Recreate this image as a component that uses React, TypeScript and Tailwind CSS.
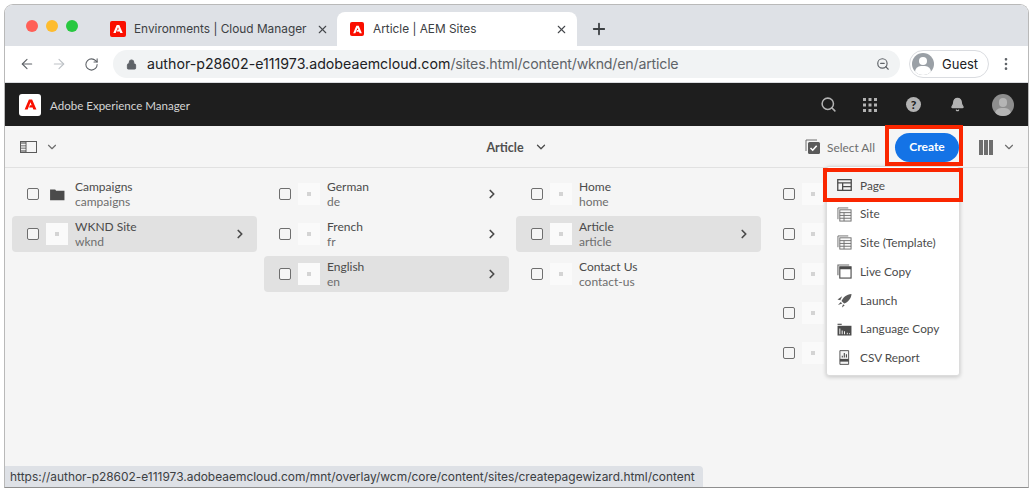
import { ChevronDown, ChevronRight, Plus, X, ArrowLeft, ArrowRight, RotateCw, Lock, ZoomOut, EllipsisVertical, Search, Bell } from "lucide-react"

const chromeFont = "font-['Inter','Liberation_Sans',sans-serif]"
const aemFont = "font-['Lato','Open_Sans',sans-serif]"

function AdobeMark({ className }: { className?: string }) {
  return (
    <svg viewBox="0 0 24 24" className={className} fill="currentColor">
      <path d="M9.4 4h5.2L21.5 20h-4.9l-1.3-3.2H9.7l1.5-3.6h2.6L12 8.5 7.4 20H2.6z" />
    </svg>
  )
}

function Thumb() {
  return (
    <div className="w-[22px] h-[22px] bg-[#fafafa] flex items-center justify-center shrink-0">
      <div className="w-[4px] h-[4px] bg-[#d4d4d4]" />
    </div>
  )
}

function FolderIcon() {
  return (
    <div className="w-[22px] h-[22px] flex items-center justify-center shrink-0">
      <svg viewBox="0 0 16 14" className="w-[15px] h-[13px]" fill="#4b4b4b">
        <path d="M0 1.5h5.5l1 1.5H15.5V13.2H0z" />
      </svg>
    </div>
  )
}

type Row = { title: string; sub?: string; selected?: boolean; arrow?: boolean; folder?: boolean }

function ColumnRow({ row }: { row: Row }) {
  return (
    <div className={`h-[36px] mb-[3.75px] rounded-[4px] flex items-center pl-[15px] pr-[10px] ${row.selected ? "bg-[#e1e1e1]" : ""}`}>
      <div className="w-[12px] h-[12px] border border-[#6e6e6e] rounded-[2px] bg-[#f5f5f5] shrink-0" />
      <div className="ml-[7px]">{row.folder ? <FolderIcon /> : <Thumb />}</div>
      <div className="ml-[7px] flex-1 text-[12px] leading-[15px] text-[#4b4b4b]">
        <div>{row.title}</div>
        {row.sub && <div className="text-[#6e6e6e]">{row.sub}</div>}
      </div>
      {row.arrow && <ChevronRight size={14} strokeWidth={3} className="text-[#4b4b4b]" />}
    </div>
  )
}

const columns: Row[][] = [
  [
    { title: "Campaigns", sub: "campaigns", folder: true },
    { title: "WKND Site", sub: "wknd", selected: true, arrow: true },
  ],
  [
    { title: "German", sub: "de", arrow: true },
    { title: "French", sub: "fr", arrow: true },
    { title: "English", sub: "en", selected: true, arrow: true },
  ],
  [
    { title: "Home", sub: "home" },
    { title: "Article", sub: "article", selected: true, arrow: true },
    { title: "Contact Us", sub: "contact-us" },
  ],
  [{ title: "" }, { title: "" }, { title: "" }, { title: "" }, { title: "" }],
]

function PageIcon() {
  return (
    <svg viewBox="0 0 16 13" className="w-[15px] h-[12px]" fill="none" stroke="#4b4b4b" strokeWidth="1.4">
      <rect x="0.7" y="0.7" width="14.6" height="11.6" />
      <path d="M0.7 4.2h14.6M6 4.2v8.1M6 8.2h9.3" />
    </svg>
  )
}

function SiteIcon() {
  return (
    <svg viewBox="0 0 16 16" className="w-[15px] h-[15px]" fill="none" stroke="#6e6e6e" strokeWidth="1">
      <path d="M1 13V1h11" />
      <rect x="3" y="3" width="12" height="12" fill="#f8f8f8" />
      <path d="M3 6h12M3 9h12M3 12h12M7.5 6v9" />
    </svg>
  )
}

function LiveCopyIcon() {
  return (
    <svg viewBox="0 0 16 16" className="w-[15px] h-[15px]" fill="none" stroke="#6e6e6e" strokeWidth="1.2">
      <path d="M1 12V1h12" />
      <rect x="3" y="3" width="12" height="12" stroke="#4b4b4b" />
      <rect x="3" y="3" width="12" height="2.6" fill="#4b4b4b" stroke="none" />
    </svg>
  )
}

function LaunchIcon() {
  return (
    <svg viewBox="0 0 16 16" className="w-[15px] h-[15px]" fill="#5a5a5a">
      <path d="M15.5 1C10 1.5 6.5 4.5 4.8 8.5l2.8 2.8c4-1.7 7.4-5 7.9-10.3z" />
      <path d="M5.5 3.5 0.5 7l3 .6zM4 9.5l-3 3.4 4.6-1.8zM6.4 12l-1.2 3.4 3-2.2z" />
    </svg>
  )
}

function LanguageIcon() {
  return (
    <svg viewBox="0 0 16 14" className="w-[15px] h-[13px]">
      <path d="M0.5 0.8h4.5v1.2H0.5z" fill="#4b4b4b" />
      <path d="M0.5 3h15v10.5H0.5z" fill="#4b4b4b" />
      <path d="M2.5 6h1v6h-1zM5 8h1v4H5zM7.5 9h1v3h-1zM10.5 10.5h1V12h-1zM12.8 11h1v1h-1z" fill="#fff" />
    </svg>
  )
}

function ReportIcon() {
  return (
    <svg viewBox="0 0 12 16" className="w-[11px] h-[15px]">
      <path d="M1 0.5h9.5v15H1z" fill="#f4f4f4" stroke="#4b4b4b" />
      <rect x="1" y="9.5" width="9.5" height="3" fill="#4b4b4b" />
      <path d="M3 8h1.2V6H3zM5.2 8h1.2V3H5.2zM7.5 8h1.2V4.5H7.5z" fill="#4b4b4b" />
    </svg>
  )
}

const menuItems = [
  { label: "Page", icon: <PageIcon />, strong: true },
  { label: "Site", icon: <SiteIcon /> },
  { label: "Site (Template)", icon: <SiteIcon /> },
  { label: "Live Copy", icon: <LiveCopyIcon /> },
  { label: "Launch", icon: <LaunchIcon /> },
  { label: "Language Copy", icon: <LanguageIcon /> },
  { label: "CSV Report", icon: <ReportIcon /> },
]

export default function App() {
  return (
    <div className="w-[1033px] h-[492px] bg-white p-[4px] overflow-hidden">
      <div className="relative h-[484px] flex flex-col rounded-t-[9px] overflow-hidden border border-[#b9b9b9] border-b-[#8f8f8f]">
        {/* tab strip */}
        <div className={`h-[41px] bg-[#dee1e6] flex items-end ${chromeFont} text-[11.85px] text-[#3c4043]`}>
          <div className="flex items-center gap-[8px] pl-[21px] w-[100px] h-full">
            <span className="w-[12px] h-[12px] rounded-full bg-[#ff5f57]" />
            <span className="w-[12px] h-[12px] rounded-full bg-[#febc2e]" />
            <span className="w-[12px] h-[12px] rounded-full bg-[#28c840]" />
          </div>
          <div className="w-[232px] h-[34px] flex items-center pl-[5px]">
            <div className="w-[16px] h-[16px] rounded-[2px] bg-[#fa0f00] text-white flex items-center justify-center">
              <AdobeMark className="w-[12px] h-[12px]" />
            </div>
            <span className="ml-[8px] mt-[1px] flex-1 whitespace-nowrap">Environments | Cloud Manager</span>
            <X size={13} className="mr-[8px] text-[#45484c]" />
          </div>
          <div className="w-[240px] h-[34px] bg-white rounded-t-[8px] flex items-center pl-[13px] pr-[9px]">
            <div className="w-[14px] h-[14px] rounded-[2px] bg-[#fa0f00] text-white flex items-center justify-center">
              <AdobeMark className="w-[11px] h-[11px]" />
            </div>
            <span className="ml-[9px] mt-[1px] flex-1">Article | AEM Sites</span>
            <X size={13} className="text-[#45484c]" />
          </div>
          <div className="h-[34px] flex items-center ml-[13px]">
            <Plus size={18} strokeWidth={2.4} className="text-[#3c4043]" />
          </div>
        </div>

        {/* browser toolbar */}
        <div className={`h-[37px] bg-white border-b border-[#dadce0] flex items-center ${chromeFont}`}>
          <ArrowLeft size={16} strokeWidth={1.7} className="ml-[14px] text-[#5f6368]" />
          <ArrowRight size={16} strokeWidth={1.7} className="ml-[16px] text-[#bdc1c6]" />
          <RotateCw size={15} strokeWidth={1.7} className="ml-[17px] text-[#5f6368]" />
          <div className="ml-[14px] w-[787px] h-[28px] rounded-full bg-[#f1f3f4] flex items-center pl-[13px] pr-[10px]">
            <Lock size={11} className="text-[#5f6368] fill-[#5f6368]" />
            <span className="ml-[10px] flex-1 text-[14.2px] text-[#5f6368] whitespace-nowrap tracking-[-0.2px]">
              <span className="text-[#202124] tracking-[0px]">author-p28602-e111973.adobeaemcloud.com</span>/sites.html/content/wknd/en/article
            </span>
            <ZoomOut size={14} className="text-[#5f6368]" />
          </div>
          <div className="ml-[9px] w-[80px] h-[28px] rounded-full border border-[#dadce0] flex items-center pl-[2px]">
            <div className="relative w-[22px] h-[22px] rounded-full bg-[#9aa0a6] overflow-hidden">
              <div className="absolute top-[4px] left-[7px] w-[8px] h-[8px] rounded-full bg-white" />
              <div className="absolute top-[13px] left-[3px] w-[16px] h-[12px] rounded-full bg-white" />
            </div>
            <span className="ml-[8px] mt-[1px] text-[13px] text-[#202124]">Guest</span>
          </div>
          <EllipsisVertical size={16} className="ml-[9px] text-[#5f6368]" />
        </div>

        {/* app header */}
        <div className={`h-[43px] bg-[#1e1e1e] flex items-center pl-[14px] ${aemFont}`}>
          <div className="w-[22px] h-[22px] rounded-[3px] bg-white text-[#fa0f00] flex items-center justify-center">
            <AdobeMark className="w-[15px] h-[15px]" />
          </div>
          <span className="ml-[9px] mt-[3px] text-[11.55px] text-[#d5d5d5]">Adobe Experience Manager</span>
          <div className="ml-auto flex items-center text-[#b3b3b3]">
            <Search size={17} strokeWidth={2.2} />
            <svg viewBox="0 0 14 14" className="ml-[26px] w-[14px] h-[14px]" fill="#b3b3b3">
              <rect x="0" y="0" width="3" height="3" />
              <rect x="5.5" y="0" width="3" height="3" />
              <rect x="11" y="0" width="3" height="3" />
              <rect x="0" y="5.5" width="3" height="3" />
              <rect x="5.5" y="5.5" width="3" height="3" />
              <rect x="11" y="5.5" width="3" height="3" />
              <rect x="0" y="11" width="3" height="3" />
              <rect x="5.5" y="11" width="3" height="3" />
              <rect x="11" y="11" width="3" height="3" />
            </svg>
            <div className="ml-[29px] w-[15px] h-[15px] rounded-full bg-[#b3b3b3] text-[#1e1e1e] text-[12px] font-black leading-[15px] text-center">?</div>
            <Bell size={15} className="ml-[29px] fill-[#b3b3b3]" />
            <div className="relative ml-[27px] mr-[14px] w-[22px] h-[22px] rounded-full bg-[#8e8e8e] overflow-hidden">
              <div className="absolute top-[4px] left-[7px] w-[8px] h-[9px] rounded-full bg-[#b5b5b5]" />
              <div className="absolute top-[14px] left-[3px] w-[16px] h-[12px] rounded-full bg-[#b5b5b5]" />
            </div>
          </div>
        </div>

        {/* action bar */}
        <div className={`h-[42px] bg-[#f5f5f5] border-b border-[#e1e1e1] grid grid-cols-[1fr_auto_1fr] items-center pl-[15px] pr-[12px] pt-[1px] ${aemFont} text-[#4b4b4b]`}>
          <div className="flex items-center">
            <svg viewBox="0 0 17 12" className="w-[17px] h-[12px]" fill="none" stroke="#5a5a5a">
              <rect x="0.5" y="0.5" width="16" height="11" />
              <rect x="0.5" y="0.5" width="5.5" height="11" fill="#9a9a9a" />
              <path d="M1 3.5h4.5M1 6h4.5M1 8.5h4.5" stroke="#f0f0f0" />
            </svg>
            <ChevronDown size={14} strokeWidth={2} className="ml-[8px] text-[#6e6e6e]" />
          </div>
          <div className="flex items-center -translate-x-[1px]">
            <span className="mt-[2px] text-[12.5px] font-bold text-[#505050]">Article</span>
            <ChevronDown size={14} strokeWidth={2.2} className="ml-[10px] shrink-0" />
          </div>
          <div className="flex items-center justify-end">
            <svg viewBox="0 0 16 16" className="w-[16px] h-[16px]">
              <path d="M1 12V1h11" fill="none" stroke="#6e6e6e" />
              <rect x="3" y="3" width="12" height="12" rx="1.5" fill="#5a5a5a" />
              <path d="M5.5 9l2.2 2.2 4-4.4" fill="none" stroke="#fff" strokeWidth="1.6" />
            </svg>
            <span className="ml-[6px] mt-[1px] text-[11.9px] text-[#6e6e6e]">Select All</span>
            <div className="ml-[20px] w-[64px] h-[29px] rounded-full bg-[#1473e6] text-white text-[12px] font-bold flex items-center justify-center">Create</div>
            <div className="ml-[20px] flex items-center gap-[1px]">
              <span className="w-[4px] h-[15px] bg-[#6e6e6e]" />
              <span className="w-[4px] h-[15px] bg-[#6e6e6e]" />
              <span className="w-[4px] h-[15px] bg-[#6e6e6e]" />
            </div>
            <ChevronDown size={14} strokeWidth={2} className="ml-[9px] text-[#6e6e6e]" />
          </div>
        </div>

        {/* column view */}
        <div className={`flex-1 bg-[#f5f5f5] flex gap-[7px] pl-[7px] pt-[8px] overflow-hidden ${aemFont}`}>
          {columns.map((col, i) => (
            <div key={i} className="w-[245px] shrink-0">
              {col.map((row, j) => (
                <ColumnRow key={j} row={row} />
              ))}
            </div>
          ))}
        </div>

        {/* create menu */}
        <div className={`absolute left-[821px] top-[161px] w-[134px] h-[210px] pt-[4px] bg-white rounded-[3px] border border-[#dcdcdc] shadow-[0_1px_4px_rgba(0,0,0,0.2)] ${aemFont}`}>
          {menuItems.map((item) => (
            <div key={item.label} className={`h-[28.75px] flex items-center text-[11.8px] ${item.strong ? "bg-[#f4f4f4]" : ""} text-[#4b4b4b]`}>
              <div className="w-[33px] flex justify-center pl-[2px]">{item.icon}</div>
              <span>{item.label}</span>
            </div>
          ))}
        </div>

        {/* red callouts */}
        <div className="absolute left-[880px] top-[120px] w-[78px] h-[41px] border-[4px] border-[#fa2600]" />
        <div className="absolute left-[818px] top-[163px] w-[140px] h-[34px] border-[4px] border-[#fa2600]" />

        {/* status bubble */}
        <div className={`absolute left-0 bottom-0 w-[698px] h-[21px] bg-[#dee1e6] rounded-tr-[4px] pl-[5px] flex items-center text-[11.95px] text-[#3c4043] whitespace-nowrap ${chromeFont}`}>
          https://author-p28602-e111973.adobeaemcloud.com/mnt/overlay/wcm/core/content/sites/createpagewizard.html/content
        </div>
      </div>
    </div>
  )
}
